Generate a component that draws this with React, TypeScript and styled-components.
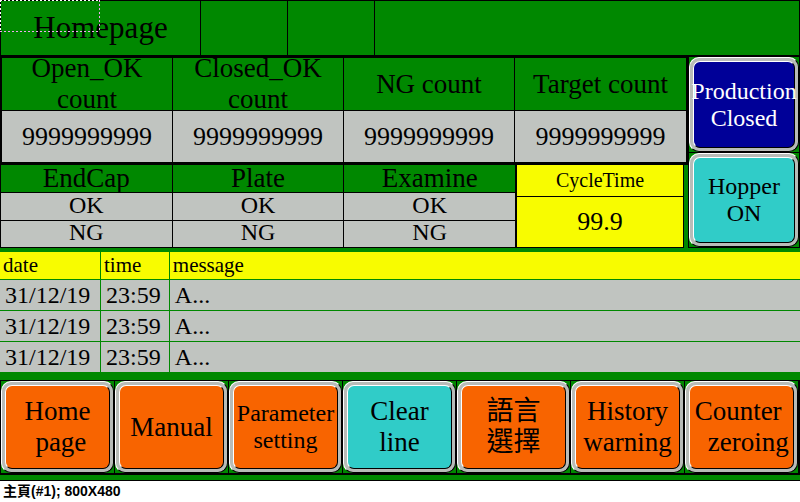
import React from "react";
import styled, { createGlobalStyle } from "styled-components";

const green = "#008800";
const grey = "#c0c4c0";
const yellow = "#f8fc00";
const orange = "#f86400";
const teal = "#30ccc8";
const navy = "#000098";

const GlobalStyle = createGlobalStyle`
  *, *::before, *::after { box-sizing: border-box; }
  body {
    margin: 0;
    background: #fff;
    color: #000;
    font-family: "Liberation Serif", "Noto Sans CJK TC", serif;
  }
`;

const Screen = styled.main`
  position: relative;
  background: ${green};
  border-bottom: 1px solid #000;
  padding-bottom: 5px;
`;

const Selection = styled.svg`
  position: absolute;
  top: 0;
  left: 0;
  width: 100px;
  height: 32px;
  pointer-events: none;
`;

const Header = styled.header`
  display: grid;
  grid-template-columns: 199fr 87fr 87fr 425fr;
  height: 55px;
  border: 1px solid #000;
  border-bottom: 0;
`;

const HeaderSlot = styled.div`
  border-left: 1px solid #000;
`;

const Title = styled.h1`
  margin: 0;
  text-align: center;
  font-size: 31px;
  line-height: 54px;
  font-weight: 400;
`;

const Upper = styled.div`
  display: grid;
  grid-template-columns: minmax(0, 688fr) minmax(0, 112fr);
`;

const Frame = styled.div`
  border: solid #000;
  border-width: 3px 2px 3px 2px;
`;

const Grid = styled.table`
  width: 100%;
  table-layout: fixed;
  border-collapse: separate;
  border-spacing: 0;
`;

const CountHead = styled.th`
  padding: 0;
  background: ${green};
  border-bottom: 1px solid #000;
  font-weight: 400;
  &:not(:last-child) { border-right: 1px solid #000; }
`;

const CountLabel = styled.div`
  display: flex;
  align-items: center;
  justify-content: center;
  height: 52px;
  font-size: 27px;
  line-height: 31px;
  white-space: pre;
`;

const CountValue = styled.td`
  height: 51px;
  padding: 0;
  background: ${grey};
  font-size: 26px;
  line-height: 48px;
  text-align: center;
  &:not(:last-child) { border-right: 1px solid #000; }
`;

const StatusRow = styled.div`
  display: grid;
  grid-template-columns: 515fr 169fr;
  padding-right: 4px;
`;

const StatusHead = styled.th`
  height: 28px;
  padding: 0;
  background: ${green};
  border: solid #000;
  border-width: 0 0 1px 1px;
  font-size: 27px;
  line-height: 27px;
  font-weight: 400;
`;

const StatusCell = styled.td`
  height: 28px;
  padding: 0 0 3px;
  background: ${grey};
  border: solid #000;
  border-width: 0 0 1px 1px;
  font-size: 24px;
  line-height: 23px;
  text-align: center;
  tr:last-child > & { height: 27px; }
`;

const Cycle = styled.section`
  display: flex;
  flex-direction: column;
  background: ${yellow};
  border: solid #000;
  border-width: 0 1px 1px 2px;
  text-align: center;
`;

const CycleLabel = styled.h2`
  margin: 0;
  border-bottom: 1px solid #000;
  font-size: 20px;
  line-height: 31px;
  font-weight: 400;
`;

const CycleValue = styled.output`
  font-size: 26px;
  line-height: 50px;
`;

const SideButtons = styled.div`
  display: grid;
  grid-template-rows: 95px 94px;
  gap: 1px;
  background: #000;
  border: solid #000;
  border-width: 2px 1px 1px 1px;
`;

const Slot = styled.div`
  display: grid;
  background: ${green};
`;

const Key = styled.button<{ $face: string; $ink?: string; $small?: boolean }>`
  min-width: 0;
  padding: 0;
  border: 1px solid #fff;
  border-right-color: #000;
  border-bottom-color: #000;
  border-radius: 10px;
  background: #b8bcb8;
  color: ${(p) => p.$ink ?? "#000"};
  font-family: inherit;
  font-size: ${(p) => (p.$small ? 24 : 27)}px;
  line-height: ${(p) => (p.$small ? 27 : 31)}px;
  display: grid;
  cursor: pointer;

  & > span {
    display: flex;
    align-items: center;
    justify-content: center;
    min-width: 0;
    margin: 3px;
    border: 1px solid #fff;
    border-right-color: #000;
    border-bottom-color: #000;
    border-radius: 7px;
    background: ${(p) => p.$face};
    white-space: pre;
  }
`;

const Log = styled.table`
  width: 100%;
  margin-top: 4px;
  table-layout: fixed;
  border-collapse: separate;
  border-spacing: 0;
  text-align: left;
`;

const LogCol = styled.col<{ $share?: string }>`
  width: ${(p) => p.$share ?? "auto"};
`;

const LogHead = styled.th`
  height: 28px;
  padding: 0 0 0 3px;
  background: ${yellow};
  border-bottom: 1px solid ${green};
  font-size: 21px;
  line-height: 27px;
  font-weight: 400;
  & + & { border-left: 1px solid ${green}; }
`;

const LogCell = styled.td`
  height: 31px;
  padding: 0 0 0 5px;
  background: ${grey};
  border-bottom: 1px solid ${green};
  font-size: 24px;
  line-height: 30px;
  & + & { border-left: 1px solid ${green}; }
`;

const Nav = styled.nav`
  display: grid;
  grid-template-columns: repeat(7, minmax(0, 1fr));
  grid-auto-rows: 92px;
  gap: 1px;
  margin-top: 7px;
  padding: 1px 2px 2px 1px;
  background: #000;
`;

const Caption = styled.footer`
  padding-left: 3px;
  font-family: "Liberation Sans", "Noto Sans CJK TC", sans-serif;
  font-size: 14px;
  line-height: 20px;
  font-weight: 700;
`;

const counts = ["Open_OK\ncount", "Closed_OK\ncount", "NG count", "Target count"];
const stations = ["EndCap", "Plate", "Examine"];
const keys = [
  { text: "Home\n page", face: orange },
  { text: "Manual", face: orange },
  { text: "Parameter\nsetting", face: orange, small: true },
  { text: "Clear\nline", face: teal },
  { text: "語言\n選擇", face: orange },
  { text: "History\nwarning", face: orange },
  { text: "Counter \n  zeroing", face: orange },
];

export default function App() {
  return (
    <>
      <GlobalStyle />
      <Screen>
        <Header>
          <Title>Homepage</Title>
          <HeaderSlot />
          <HeaderSlot />
          <HeaderSlot />
        </Header>
        <Upper>
          <div>
            <Frame>
              <Grid>
                <thead>
                  <tr>
                    {counts.map((c) => (
                      <CountHead key={c} scope="col">
                        <CountLabel>{c}</CountLabel>
                      </CountHead>
                    ))}
                  </tr>
                </thead>
                <tbody>
                  <tr>
                    {counts.map((c) => (
                      <CountValue key={c}>9999999999</CountValue>
                    ))}
                  </tr>
                </tbody>
              </Grid>
            </Frame>
            <StatusRow>
              <Grid>
                <thead>
                  <tr>
                    {stations.map((s) => (
                      <StatusHead key={s} scope="col">{s}</StatusHead>
                    ))}
                  </tr>
                </thead>
                <tbody>
                  {["OK", "NG"].map((v) => (
                    <tr key={v}>
                      {stations.map((s) => (
                        <StatusCell key={s}>{v}</StatusCell>
                      ))}
                    </tr>
                  ))}
                </tbody>
              </Grid>
              <Cycle>
                <CycleLabel>CycleTime</CycleLabel>
                <CycleValue>99.9</CycleValue>
              </Cycle>
            </StatusRow>
          </div>
          <SideButtons>
            <Slot>
              <Key type="button" $face={navy} $ink="#fff" $small>
                <span>{"Production\nClosed"}</span>
              </Key>
            </Slot>
            <Slot>
              <Key type="button" $face={teal} $small>
                <span>{"Hopper\nON"}</span>
              </Key>
            </Slot>
          </SideButtons>
        </Upper>
        <Log>
          <colgroup>
            <LogCol $share="12.5%" />
            <LogCol $share="8.6%" />
            <LogCol />
          </colgroup>
          <thead>
            <tr>
              <LogHead scope="col">date</LogHead>
              <LogHead scope="col">time</LogHead>
              <LogHead scope="col">message</LogHead>
            </tr>
          </thead>
          <tbody>
            {[1, 2, 3].map((n) => (
              <tr key={n}>
                <LogCell>31/12/19</LogCell>
                <LogCell>23:59</LogCell>
                <LogCell>A...</LogCell>
              </tr>
            ))}
          </tbody>
        </Log>
        <Nav>
          {keys.map((k) => (
            <Slot key={k.text}>
              <Key type="button" $face={k.face} $small={k.small}>
                <span>{k.text}</span>
              </Key>
            </Slot>
          ))}
        </Nav>
        <Selection viewBox="0 0 100 32" aria-hidden="true" fill="none" strokeDasharray="2 2">
          <path d="M0 .5H100M.5 0V32" stroke="#fff" />
          <path d="M99.5 0V32M0 31.5H100" stroke="#f0a8f0" />
        </Selection>
      </Screen>
      <Caption>主頁(#1); 800X480</Caption>
    </>
  );
}
